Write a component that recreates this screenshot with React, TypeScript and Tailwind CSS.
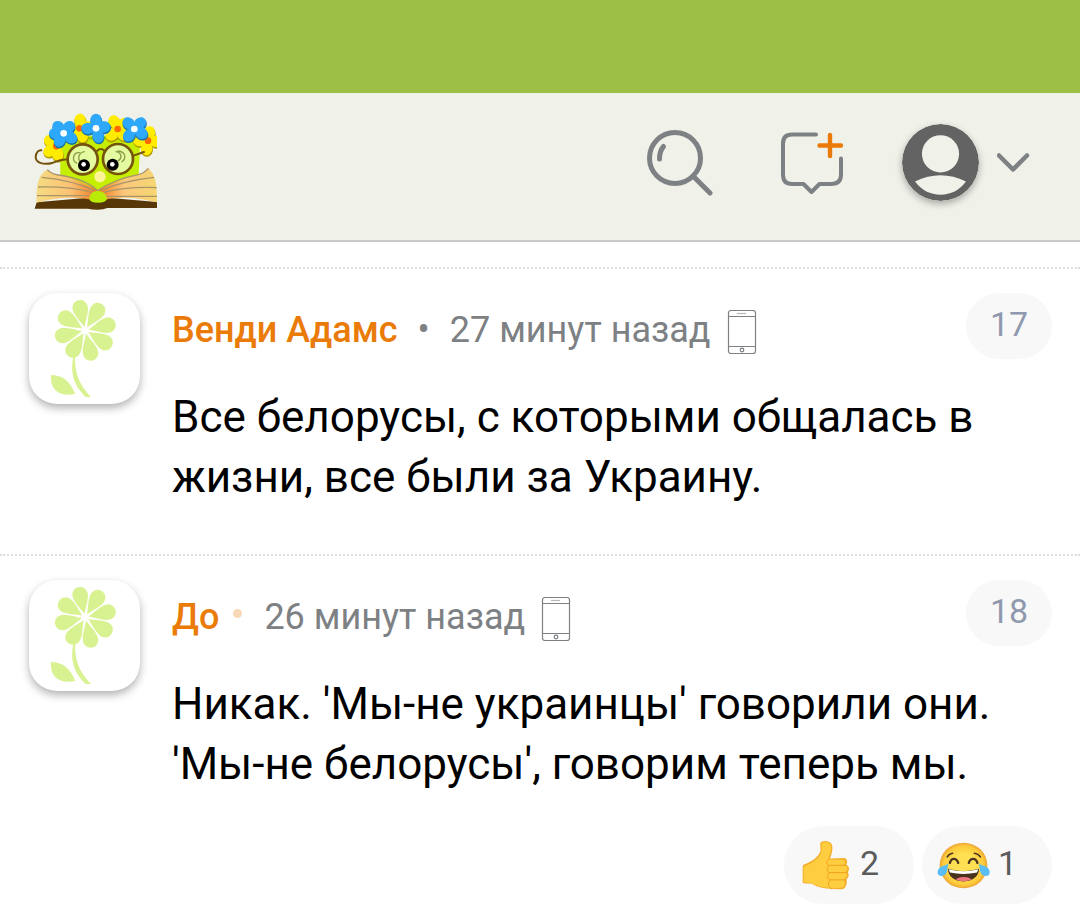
import React from 'react';

type Reaction = { name: string; count: number };

type CommentData = {
  id: number;
  author: string;
  online: boolean;
  time: string;
  text: string;
  reactions: Reaction[];
};

const COMMENTS: CommentData[] = [
  {
    id: 17,
    author: 'Венди Адамс',
    online: false,
    time: '27 минут назад',
    text: 'Все белорусы, с которыми общалась в жизни, все были за Украину.',
    reactions: []
  },
  {
    id: 18,
    author: 'До',
    online: true,
    time: '26 минут назад',
    text: "Никак. 'Мы-не украинцы' говорили они. 'Мы-не белорусы', говорим теперь мы.",
    reactions: [
      { name: 'like', count: 2 },
      { name: 'laugh', count: 1 }
    ]
  }
];

const PETALS = [-13, 32, 77, 122, 167, 212, 257, 302];

const WREATH = [
  { x: 109, y: 138, angles: [-50, 170, 235], petal: '#ffec00', shade: '#b39b00', core: '#ff6a00' },
  { x: 384, y: 121, angles: [10, 95, 190, 270], petal: '#ffec00', shade: '#b39b00', core: '#ff6a00' },
  { x: 178, y: 84, angles: [5, 80, 160, 230], petal: '#ffec00', shade: '#b39b00', core: '#ff6a00' },
  { x: 293, y: 86, angles: [-25, 50, 135, 225], petal: '#ffec00', shade: '#b39b00', core: '#ff6a00' },
  { x: 131, y: 99, angles: [-40, 40, 120, 210, 270], petal: '#2ea8fa', shade: '#1a76a6', core: '#ffffff' },
  { x: 343, y: 86, angles: [-45, 45, 120, 220], petal: '#2ea8fa', shade: '#1a76a6', core: '#ffffff' },
  { x: 228, y: 84, angles: [0, 80, 165, 270], petal: '#2ea8fa', shade: '#1a76a6', core: '#ffffff' }
];

const Logo = () => (
  <svg viewBox="42 38 369 291" className="w-[123px] h-[97px]" aria-hidden="true">
    <defs>
      <linearGradient id="pageLeft" x1="0" x2="1">
        <stop offset="0" stopColor="#f5dc82" />
        <stop offset="0.55" stopColor="#fbc274" />
        <stop offset="1" stopColor="#f4791c" />
      </linearGradient>
      <linearGradient id="pageRight" x1="1" x2="0">
        <stop offset="0" stopColor="#f5d672" />
        <stop offset="0.55" stopColor="#fbc87c" />
        <stop offset="1" stopColor="#f4791c" />
      </linearGradient>
    </defs>
    <path d="M121 130Q240 80 360 130L354 270H121Z" fill="#c6ee04" />
    <path d="M120 126Q240 100 358 126" fill="none" stroke="#9cc400" strokeWidth="8" />
    <path d="M50 306L44 325H204Q216 328 233 328T262 323H411V305L262 292H204Z" fill="#573608" />
    <path d="M82 208C55 222 49 250 50 307Q145 280 233 302V270Q170 234 100 220Z" fill="url(#pageLeft)" />
    <path d="M385 204C405 226 411 240 411 306Q320 280 233 302V270Q300 236 366 219Z" fill="url(#pageRight)" />
    <g fill="none" stroke="#a8956a" strokeWidth="4">
      <path d="M82 208Q95 221 115 224Q195 235 233 271Q285 236 355 223Q372 219 385 204" />
      <path d="M65 231Q155 239 222 270M54 260Q150 258 216 276M51 286H208" />
      <path d="M402 231Q310 241 245 270M410 262Q320 258 252 276M411 288H260" />
    </g>
    <path d="M208 296C208 280 220 272 234 272S260 282 261 296Q258 307 234 307T208 296Z" fill="#b9ea08" />
    <circle cx="240" cy="229" r="17" fill="#fff398" />
    {WREATH.map((f) => (
      <g key={f.x} transform={`translate(${f.x} ${f.y})`}>
        {f.angles.map((a) => (
          <ellipse key={a} cx="0" cy="-24" rx="18" ry="21" fill={f.shade} transform={`translate(1 4) rotate(${a})`} />
        ))}
        {f.angles.map((a) => (
          <ellipse key={a} cx="0" cy="-24" rx="17" ry="20" fill={f.petal} transform={`rotate(${a})`} />
        ))}
        <circle r="16" fill={f.petal} />
        <circle r="10" fill={f.core} />
      </g>
    ))}
    <g fill="#e5fba0" stroke="#76530c" strokeWidth="8">
      <circle cx="188" cy="177" r="45" />
      <circle cx="294" cy="176" r="45" />
    </g>
    <g fill="none" stroke="#76530c" strokeWidth="6" strokeLinecap="round">
      <path d="M231 152Q242 140 254 152M340 166L372 155" />
      <path d="M143 177Q120 178 99 187C72 195 47 188 47 170C48 155 56 149 64 150" />
    </g>
    <g fill="none" stroke="#8b9b4a" strokeWidth="4" strokeLinecap="round">
      <path d="M178 157C158 155 155 183 170 188M193 154C172 158 173 182 184 184" />
      <path d="M294 152C318 154 319 174 306 184M288 154C307 158 306 174 295 181" />
    </g>
    <circle cx="192" cy="195" r="18" />
    <circle cx="278" cy="193" r="18" />
    <circle cx="191" cy="192" r="7" fill="#fff" />
    <circle cx="277" cy="192" r="7" fill="#fff" />
  </svg>
);

const SearchIcon = () => (
  <svg viewBox="0 0 67 67" className="w-[67px] h-[67px]" fill="none" stroke="#7d8184" strokeLinecap="round">
    <circle cx="29" cy="29" r="25.5" strokeWidth="5" />
    <path d="M47 47L64 64" strokeWidth="5" />
    <path d="M17.5 17.5Q13.5 22 13.5 30" strokeWidth="5" />
  </svg>
);

const NewTopicIcon = () => (
  <svg viewBox="0 0 64 64" className="w-16 h-16" fill="none" strokeWidth="4" strokeLinecap="round" strokeLinejoin="round">
    <path d="M36 3.5H12Q3 3.5 3 12.5V43.5Q3 53 12 53H23.5L31.5 61L39.5 53H51Q61 53 61 43.5V27.5" stroke="#7d8184" />
    <path d="M50 4V25M39.5 14.5H61" stroke="#ea7b08" strokeWidth="4.4" />
  </svg>
);

const UserIcon = () => (
  <svg viewBox="0 0 77 77" className="w-[77px] h-[77px] rounded-full shadow-[0_3px_7px_rgba(0,0,0,0.3)]">
    <circle cx="38.5" cy="38.5" r="38.5" fill="#636363" />
    <circle cx="38.5" cy="29.8" r="18.6" fill="#f0f1e9" />
    <path d="M13 57.5Q38.5 45 64 57.5Q54 70.7 38.5 70.7T13 57.5Z" fill="#f0f1e9" />
  </svg>
);

const ChevronIcon = () => (
  <svg viewBox="0 0 33 20" className="w-[33px] h-5" fill="none" stroke="#7d8184" strokeWidth="4.5" strokeLinecap="round" strokeLinejoin="round">
    <path d="M2 2.5L16 16.5L30 2.5" />
  </svg>
);

const PhoneIcon = () => (
  <svg viewBox="0 0 30 46" className="w-[30px] h-[46px] shrink-0" fill="none" stroke="#7d8184" strokeWidth="1.2">
    <rect x="1.5" y="1.5" width="27" height="43" rx="2.5" />
    <path d="M1.5 7.5H28.5M1.5 37.5H28.5" />
    <path d="M10 4.5H19" stroke="#b5b7b9" />
    <circle cx="15" cy="41" r="1.8" />
  </svg>
);

const FlowerAvatar = () => (
  <svg viewBox="57 101 333 333" className="w-[111px] h-[111px] shrink-0 rounded-[28px] bg-white shadow-[0_4px_8px_rgba(0,0,0,0.3)]" fill="#d9f291">
    {PETALS.map((a) => (
      <path
        key={a}
        d="M0 -10C-8 -30 -24 -52 -23 -71C-22 -85 -12 -93 0 -93S22 -85 23 -71C24 -52 8 -30 0 -10Z"
        transform={`translate(226 213) rotate(${a})`}
      />
    ))}
    <path d="M190 290H195C194 337 204 373 243 413H227C186 373 182 337 190 290Z" />
    <path d="M123 347C158 348 178 363 196 404C150 413 119 394 123 347Z" />
  </svg>
);

const LikeIcon = () => (
  <svg viewBox="94 90 145 150" className="w-12 h-[50px]">
    <path d="M149 99C153 90 177 90 184 102C189 117 183 132 179 145L220 144C232 145 232 157 228 165C238 169 238 181 232 187C237 193 236 203 228 208C232 220 226 238 214 238C178 239 143 235 123 222L99 220Q96 220 96 216V170Q96 165 101 163C125 153 144 142 150 121Z" fill="#f3b02c" />
    <path d="M153 100C162 93 177 96 181 106C184 121 176 136 172 149H218C228 152 226 162 218 165H225C234 170 232 184 222 187H226C232 193 230 206 219 208C226 213 224 233 212 234C178 236 143 232 123 219L99 217V170C127 159 150 145 153 121Z" fill="#ffce40" />
    <g fill="none" stroke="#eda21c" strokeWidth="3" strokeLinecap="round">
      <path d="M171 151C165 160 171 166 178 166H227M174 168C168 179 170 188 179 188H230M175 190C169 201 171 209 181 210H227M178 211C171 221 174 234 184 237" />
    </g>
  </svg>
);

const LaughIcon = () => (
  <svg viewBox="500 93 160 140" className="w-[53px] h-[47px]">
    <defs>
      <radialGradient id="face">
        <stop offset="0.5" stopColor="#ffe052" />
        <stop offset="0.85" stopColor="#fccb3c" />
        <stop offset="1" stopColor="#eea335" />
      </radialGradient>
    </defs>
    <ellipse cx="580" cy="163" rx="72" ry="69" fill="url(#face)" />
    <g fill="none" stroke="#493421" strokeLinecap="round">
      <path d="M531 137Q537 127 547 126M613 126Q624 127 631 137" strokeWidth="5" />
      <path d="M539 155C543 139 559 139 564 155M596 155C601 139 617 139 622 155" strokeWidth="7" />
    </g>
    <path d="M533 173Q580 187 627 173C627 195 608 211 580 211S533 195 533 173Z" fill="#49331f" />
    <path d="M535 174Q580 187 625 174L621 184Q580 193 539 184Z" fill="#fff" />
    <path d="M557 206C563 195 598 195 604 206Q580 215 557 206Z" fill="#ef7782" />
    <path d="M535 157C530 170 534 190 518 194C503 197 499 185 504 175C510 163 526 165 535 157Z" fill="#58bdf2" />
    <path d="M626 157C631 170 627 190 643 194C658 197 662 185 657 175C651 163 635 165 626 157Z" fill="#58bdf2" />
  </svg>
);

const Comment = ({ comment }: { comment: CommentData }) => (
  <article className="flex gap-8 border-t-2 border-dotted border-[#dedede] pt-6 pl-[29px] pr-7 pb-[47px]">
    <FlowerAvatar />
    <div className="flex-1 min-w-0">
      <div className="flex items-start justify-between">
        <div className="flex items-center h-[74px] text-4xl text-[#7d8184]">
          <a href="#" className="font-medium text-[#ea7b08]">{comment.author}</a>
          {comment.online ? (
            <span className="w-[9px] h-[9px] rounded-full bg-[#f9d8b8] ml-[14px] mr-[22px] mb-2" />
          ) : (
            <span className="mx-5">•</span>
          )}
          <time>{comment.time}</time>
          <span className="ml-4 mt-1"><PhoneIcon /></span>
        </div>
        <a href="#" className="flex items-center justify-center w-[86px] h-[66px] pb-1 rounded-full bg-[#f8f8f8] text-[34px] leading-10 text-[#8f99ae]">
          {comment.id}
        </a>
      </div>
      <p className="mt-5 text-[44px] leading-[60px] text-black">{comment.text}</p>
      {comment.reactions.length > 0 && (
        <div className="flex justify-end gap-2 mt-8">
          {comment.reactions.map((r) => (
            <button key={r.name} type="button" aria-label={r.name} className="flex items-center gap-2 w-[130px] h-[78px] pl-[15px] rounded-full bg-[#f8f8f8] text-[34px] text-[#5c5c5c]">
              <span className="w-[53px] flex justify-center">{r.name === 'like' ? <LikeIcon /> : <LaughIcon />}</span>
              <span className="pb-1">{r.count}</span>
            </button>
          ))}
        </div>
      )}
    </div>
  </article>
);

export default function App() {
  return (
    <div className="min-h-screen bg-white font-['Roboto',sans-serif]">
      <div className="h-[93px] bg-[#9ebf45]" />
      <header className="flex items-center justify-between pt-5 pb-[30px] pl-[34px] pr-[50px] bg-[#f0f1e9] border-b-2 border-[#c9c9c9]">
        <a href="#" aria-label="Главная"><Logo /></a>
        <div className="flex items-center pt-[2px]">
          <button type="button" aria-label="Поиск" className="mr-[67px]"><SearchIcon /></button>
          <button type="button" aria-label="Новая тема" className="mr-[58px]"><NewTopicIcon /></button>
          <button type="button" aria-label="Профиль" className="flex items-center gap-[18px]">
            <UserIcon />
            <ChevronIcon />
          </button>
        </div>
      </header>
      <main className="pt-[25px]">
        {COMMENTS.map((c) => (
          <Comment key={c.id} comment={c} />
        ))}
      </main>
    </div>
  );
}
